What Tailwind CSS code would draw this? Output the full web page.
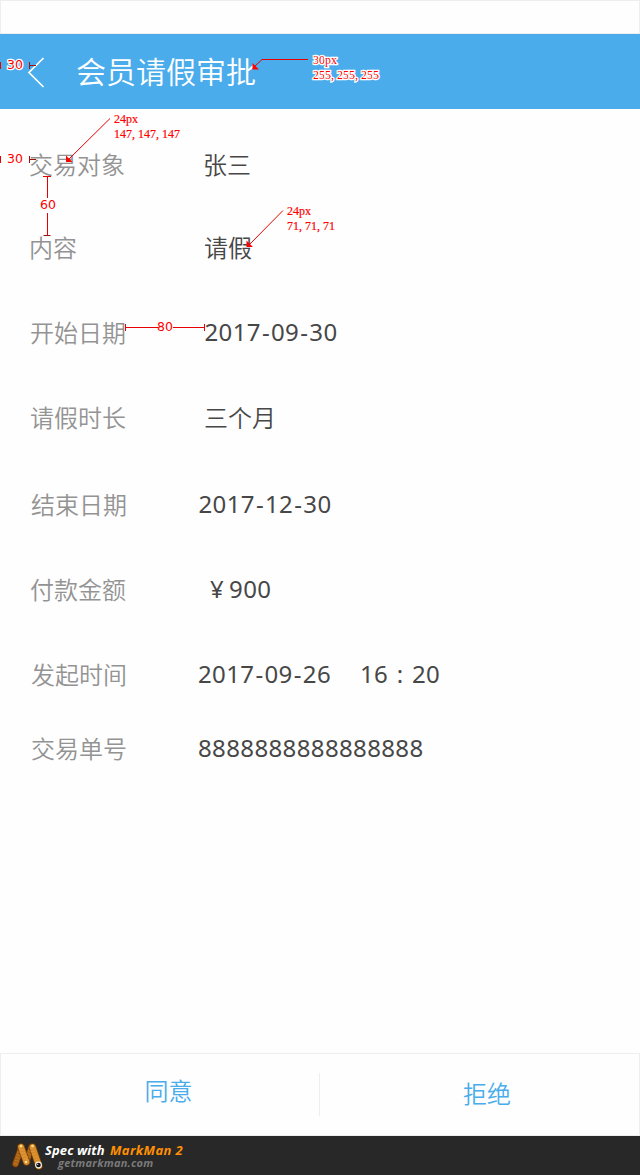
<!DOCTYPE html>
<html lang="zh-CN">
<head>
<meta charset="utf-8">
<title>会员请假审批</title>
<script src="https://cdn.jsdelivr.net/npm/@tailwindcss/browser@4"></script>
</head>
<body class="bg-[#fefefe] font-['Noto_Sans','Noto_Sans_CJK_SC',sans-serif]">
<div class="relative flex h-[1175px] w-[640px] flex-col overflow-hidden">
  <div class="h-[34px] shrink-0 border border-[#eeeeee]"></div>
  <header class="flex h-[75px] shrink-0 items-center bg-[#4aaceb] pl-[27px] text-white">
    <svg class="h-8 w-[18px] shrink-0" viewBox="0 0 18 32" fill="none" stroke="#fff" stroke-width="1.7"><path d="M16.5 2 2 16.5 16.5 31"/></svg>
    <h1 class="ml-[31px] pb-[4px] font-['Noto_Sans_CJK_SC',sans-serif] text-[30px] leading-[40px] font-[350]">会员请假审批</h1>
  </header>

  <main class="grow text-2xl text-[#474747]">
    <dl class="grid grid-cols-[168px_1fr] grid-rows-[83px_84px_86px_83px_91px_79px_92px_55px] items-center pt-[13px] pl-[30px] [&>dt]:font-['Noto_Sans_CJK_SC',sans-serif] [&>dt]:font-[350] [&>dt]:text-[#939393]">
      <dt class="-ml-px">交易对象</dt><dd class="pl-[5px] font-['Noto_Sans_CJK_SC',sans-serif] font-[350]">张三</dd>
      <dt class="-ml-px">内容</dt><dd class="pl-[6px] font-['Noto_Sans_CJK_SC',sans-serif] font-[350]">请假</dd>
      <dt>开始日期</dt><dd class="pl-[6.5px] tracking-[0.37px]">2017<span class="px-px">-</span>09<span class="px-px">-</span>30</dd>
      <dt>请假时长</dt><dd class="pl-[6px] font-['Noto_Sans_CJK_SC',sans-serif] font-[350]">三个月</dd>
      <dt class="pl-px">结束日期</dt><dd class="pl-[0.5px] tracking-[0.37px]">2017<span class="px-px">-</span>12<span class="px-px">-</span>30</dd>
      <dt>付款金额</dt><dd class="pl-[12px] tracking-[0.37px]">¥<span class="pl-[5px]">900</span></dd>
      <dt class="pl-px">发起时间</dt><dd class="flex tracking-[0.37px]"><span class="w-[162px]">2017<span class="px-px">-</span>09<span class="px-px">-</span>26</span><span>16<span class="px-[8.5px]">:</span>20</span></dd>
      <dt class="pl-px">交易单号</dt><dd class="tracking-[0.37px]">8888888888888888</dd>
    </dl>
  </main>

  <div class="flex h-[83px] shrink-0 items-center border border-[#eeeeee] font-['Noto_Sans_CJK_SC',sans-serif] text-2xl font-[350] text-[#4aaceb]">
    <button class="w-[318px] pb-[9px] pl-[17px]">同意</button>
    <div class="h-[43px] w-px bg-[#eeeeee]"></div>
    <button class="grow pb-[4px] pl-[15px]">拒绝</button>
  </div>

  <footer class="flex h-[39px] shrink-0 items-start bg-[#282828] pl-[11px] font-['Open_Sans',sans-serif] font-bold italic">
    <svg class="mt-[6px] h-[30px] w-[34px] shrink-0" viewBox="0 0 34 30" fill="none" stroke-linecap="round">
      <path d="M4.500 22 10.500 5M15.500 20 20.500 5" stroke="#5f3208" stroke-width="7"/>
      <path d="M4.500 22 10.500 5M15.500 20 20.500 5" stroke="#a85f12" stroke-width="5.500"/>
      <path d="M10 5 15.500 20M21.500 5 28 24" stroke="#6e3b09" stroke-width="7.500"/>
      <path d="M10 5 15.500 20M21.500 5 28 24" stroke="#d68b2a" stroke-width="6"/>
      <path d="M4.500 22 10.500 5M10 5 15.500 20 20.500 5 28 24" stroke="#f6c46a" stroke-width="4" stroke-dasharray=".8 2.2" stroke-linecap="butt" opacity=".3"/>
      <circle cx="10" cy="4" r="1.3" fill="#fbe39b"/><circle cx="21.500" cy="4" r="1.300" fill="#fbe39b"/><circle cx="15" cy="20" r="1.300" fill="#fbe39b"/>
      <circle cx="27.500" cy="23" r="3.400" fill="#f2f2f2"/><circle cx="27.500" cy="23" r="2.300" fill="#151515"/><circle cx="26.700" cy="22.300" r=".6" fill="#fff"/>
    </svg>
    <div class="mt-[8px] whitespace-nowrap">
      <p class="flex h-[13px] items-center text-[13px] leading-[13px] text-white"><span class="w-[65px] tracking-[0.1px]">Spec with</span><span class="tracking-[0.4px] text-[#ff9000]">MarkMan 2</span></p>
      <p class="h-[13px] pl-[13px] text-[11px] leading-[12px] tracking-[0.25px] text-[#7a7a7a]">getmarkman.com</p>
    </div>
  </footer>

  <!-- Spec annotations lying over the screen -->
  <svg class="pointer-events-none absolute inset-0" width="640" height="1175" viewBox="0 0 640 1175" fill="none" stroke="#e60000">
    <g stroke-width="1">
      <path d="M.5 62v7M.5 156v7M43 176.500h8M47.500 177v21M47.500 213v22M125.500 324v7M126 327.500h32M173 327.500h31M204.500 324v7"/>
      <path d="M29.500 62v7M30 65.500h6M29.500 156v7M30 159.500h6M43.500 235.500h7" stroke="#a01010"/>
      <path d="M308 59.500H262L254 67M110 118.500 68 160M283 210.500 248 246"/>
      <path d="M253.500 65.500v3h3zM67 158v3h3zM247.500 243v3h3z" fill="#f00" stroke="#f00" stroke-width="2"/>
    </g>
    <g class="font-['DejaVu_Sans',sans-serif] text-[12.5px]" fill="#f00" stroke="none">
      <text x="7" y="69" stroke="#fff" stroke-width="2.500" paint-order="stroke">30</text>
      <text x="7" y="163">30</text>
      <text x="40" y="209">60</text>
      <text x="157" y="331">80</text>
    </g>
    <g class="font-['Liberation_Serif',serif] text-[12px]" fill="#f00" stroke="none">
      <g stroke="#fff" stroke-width="2.500" paint-order="stroke">
        <text x="313 319 325 331" y="64">30px</text>
        <text x="313 319 325 331 337 343 349 355 361 367 373" y="79">255,255,255</text>
      </g>
      <g stroke="#f00" stroke-width=".2">
        <text x="114 120 126 132" y="123">24px</text>
        <text x="114 120 126 132 138 144 150 156 162 168 174" y="138">147,147,147</text>
        <text x="287 293 299 305" y="215">24px</text>
        <text x="287 293 299 305 311 317 323 329" y="230">71,71,71</text>
      </g>
    </g>
  </svg>
</div>
</body>
</html>
